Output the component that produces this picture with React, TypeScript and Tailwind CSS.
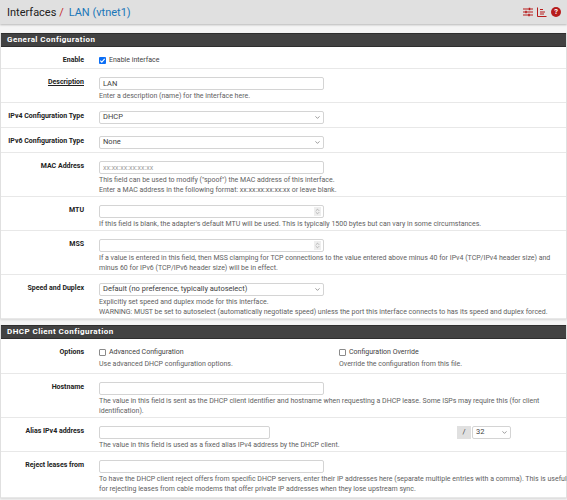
import { ReactNode } from 'react'
import { ChevronDown, ChevronsUpDown } from 'lucide-react'

function Row({ label, underline, h, children }: { label: string; underline?: boolean; h: string; children: ReactNode }) {
  return (
    <div className={`flex border-b border-[#e8e8e8] bg-white ${h}`}>
      <div className="w-[83px] shrink-0 pt-[8px] text-right text-[7px] leading-[11px] font-bold whitespace-nowrap text-[#212121]">
        <span className={underline ? 'underline' : ''}>{label}</span>
      </div>
      <div className="ml-[15px] min-w-0 flex-1 pt-[7.5px]">{children}</div>
    </div>
  )
}

function Help({ children }: { children: ReactNode }) {
  return <p className="mt-[1px] text-[7px] leading-[10px] whitespace-nowrap text-[#616161]">{children}</p>
}

function TextBox({ value, placeholder, w = 'w-[225px]', spin }: { value?: string; placeholder?: string; w?: string; spin?: boolean }) {
  return (
    <div className={`relative h-[13px] rounded-[2px] border border-[#d4d4d4] bg-white ${w}`}>
      <input
        readOnly
        value={value ?? ''}
        placeholder={placeholder}
        className="block h-full w-full bg-transparent px-[3px] text-[7.5px] text-[#424242] outline-none placeholder:text-[7px] placeholder:text-[#9e9e9e]"
      />
      {spin && (
        <span className="absolute top-[1px] right-[2px] flex h-[9px] w-[7px] items-center justify-center bg-[#eeeeee] text-[#757575]">
          <ChevronsUpDown size={7} strokeWidth={1.5} />
        </span>
      )}
    </div>
  )
}

function SelectBox({ value, w = 'w-[225px]' }: { value: string; w?: string }) {
  return (
    <div className={`flex h-[13px] items-center justify-between rounded-[2px] border border-[#d4d4d4] bg-white pr-[2px] pl-[3px] text-[7.5px] text-[#424242] ${w}`}>
      <span>{value}</span>
      <ChevronDown size={7} strokeWidth={2} className="text-[#555555]" />
    </div>
  )
}

function CheckRow({ checked, label }: { checked?: boolean; label: string }) {
  return (
    <label className="flex h-[11px] items-center gap-[3px] text-[7px] text-[#424242]">
      {checked ? (
        <span className="flex h-[7px] w-[7px] items-center justify-center rounded-[1px] bg-[#0b6ef5]">
          <svg viewBox="0 0 8 8" className="h-[7px] w-[7px]" fill="none" stroke="#ffffff" strokeWidth="1.3">
            <path d="M1.5 4.2 3.2 5.9 6.5 2.2" />
          </svg>
        </span>
      ) : (
        <span className="h-[7px] w-[7px] rounded-[1px] border border-[#8a8a8a] bg-white" />
      )}
      <span>{label}</span>
    </label>
  )
}

function PanelHead({ title }: { title: string }) {
  return (
    <div className="flex h-[14px] items-center border-y border-[#2e2e2e] bg-[#424242] pl-[6px] text-[8px] leading-none font-bold tracking-[0.45px] text-white">
      {title}
    </div>
  )
}

export default function App() {
  return (
    <div className="h-[500px] w-[567px] overflow-hidden bg-[#f5f5f5] font-['Roboto',sans-serif]">
      <header className="flex h-[24px] items-center justify-between bg-[#e0e0e0] pr-[6px] pl-[7px] shadow-[0_1px_2px_rgba(0,0,0,0.25)]">
        <h1 className="text-[11px] leading-none text-[#212121]">
          Interfaces <span className="text-[#c62828]">/</span>
          <span className="ml-[5px] text-[#1976b8]">LAN (vtnet1)</span>
        </h1>
        <div className="flex items-center gap-[4px] text-[#b71c1c]">
          <svg viewBox="0 0 10 10" className="h-[10px] w-[10px]" fill="none" stroke="currentColor" strokeWidth="1.2">
            <path d="M0 2h10M0 5h10M0 8h10" />
            <path d="M6.5 .8v2.4M3 3.8v2.4M6 6.8v2.4" strokeWidth="1.5" />
          </svg>
          <svg viewBox="0 0 10 10" className="h-[10px] w-[10px]" fill="none" stroke="currentColor" strokeWidth="1">
            <path d="M.5 .5v9h9M3 2.5h3M3 5h5M3 7h4" />
          </svg>
          <span className="flex h-[10px] w-[10px] items-center justify-center rounded-full bg-[#b71c1c] text-[7.5px] leading-none font-bold text-white">?</span>
        </div>
      </header>

      <main className="mt-[9px] border-x border-[#e0e0e0] shadow-[0_1px_2px_rgba(0,0,0,0.12)]">
        <PanelHead title="General Configuration" />
        <Row label="Enable" h="h-[22px]">
          <CheckRow checked label="Enable interface" />
        </Row>
        <Row label="Description" underline h="h-[34px]">
          <TextBox value="LAN" />
          <Help>Enter a description (name) for the interface here.</Help>
        </Row>
        <Row label="IPv4 Configuration Type" h="h-[25px]">
          <SelectBox value="DHCP" />
        </Row>
        <Row label="IPv6 Configuration Type" h="h-[25px]">
          <SelectBox value="None" />
        </Row>
        <Row label="MAC Address" h="h-[44px]">
          <TextBox placeholder="xx:xx:xx:xx:xx:xx" />
          <Help>
            This field can be used to modify ("spoof") the MAC address of this interface.
            <br />
            Enter a MAC address in the following format: xx:xx:xx:xx:xx:xx or leave blank.
          </Help>
        </Row>
        <Row label="MTU" h="h-[34px]">
          <TextBox spin />
          <Help>If this field is blank, the adapter's default MTU will be used. This is typically 1500 bytes but can vary in some circumstances.</Help>
        </Row>
        <Row label="MSS" h="h-[44px]">
          <TextBox spin />
          <Help>
            If a value is entered in this field, then MSS clamping for TCP connections to the value entered above minus 40 for IPv4 (TCP/IPv4 header size) and
            <br />
            minus 60 for IPv6 (TCP/IPv6 header size) will be in effect.
          </Help>
        </Row>
        <Row label="Speed and Duplex" h="h-[44px]">
          <SelectBox value="Default (no preference, typically autoselect)" />
          <Help>
            Explicitly set speed and duplex mode for this interface.
            <br />
            WARNING: MUST be set to autoselect (automatically negotiate speed) unless the port this interface connects to has its speed and duplex forced.
          </Help>
        </Row>
      </main>

      <section className="mt-[6px] border-x border-[#e0e0e0] shadow-[0_1px_2px_rgba(0,0,0,0.12)]">
        <PanelHead title="DHCP Client Configuration" />
        <Row label="Options" h="h-[35px]">
          <div className="flex">
            <div className="w-[240px]">
              <CheckRow label="Advanced Configuration" />
              <Help>Use advanced DHCP configuration options.</Help>
            </div>
            <div>
              <CheckRow label="Configuration Override" />
              <Help>Override the configuration from this file.</Help>
            </div>
          </div>
        </Row>
        <Row label="Hostname" h="h-[44px]">
          <TextBox />
          <Help>
            The value in this field is sent as the DHCP client identifier and hostname when requesting a DHCP lease. Some ISPs may require this (for client
            <br />
            identification).
          </Help>
        </Row>
        <Row label="Alias IPv4 address" h="h-[34px]">
          <div className="flex">
            <TextBox w="w-[171px]" />
            <div className="ml-[187px] flex">
              <span className="flex h-[13px] w-[14px] items-center justify-center bg-[#e0e0e0] text-[7.5px] text-[#424242]">/</span>
              <SelectBox value="32" w="w-[39px] ml-[1px]" />
            </div>
          </div>
          <Help>The value in this field is used as a fixed alias IPv4 address by the DHCP client.</Help>
        </Row>
        <Row label="Reject leases from" h="h-[46px]">
          <TextBox />
          <Help>
            To have the DHCP client reject offers from specific DHCP servers, enter their IP addresses here (separate multiple entries with a comma). This is useful
            <br />
            for rejecting leases from cable modems that offer private IP addresses when they lose upstream sync.
          </Help>
        </Row>
      </section>
    </div>
  )
}
